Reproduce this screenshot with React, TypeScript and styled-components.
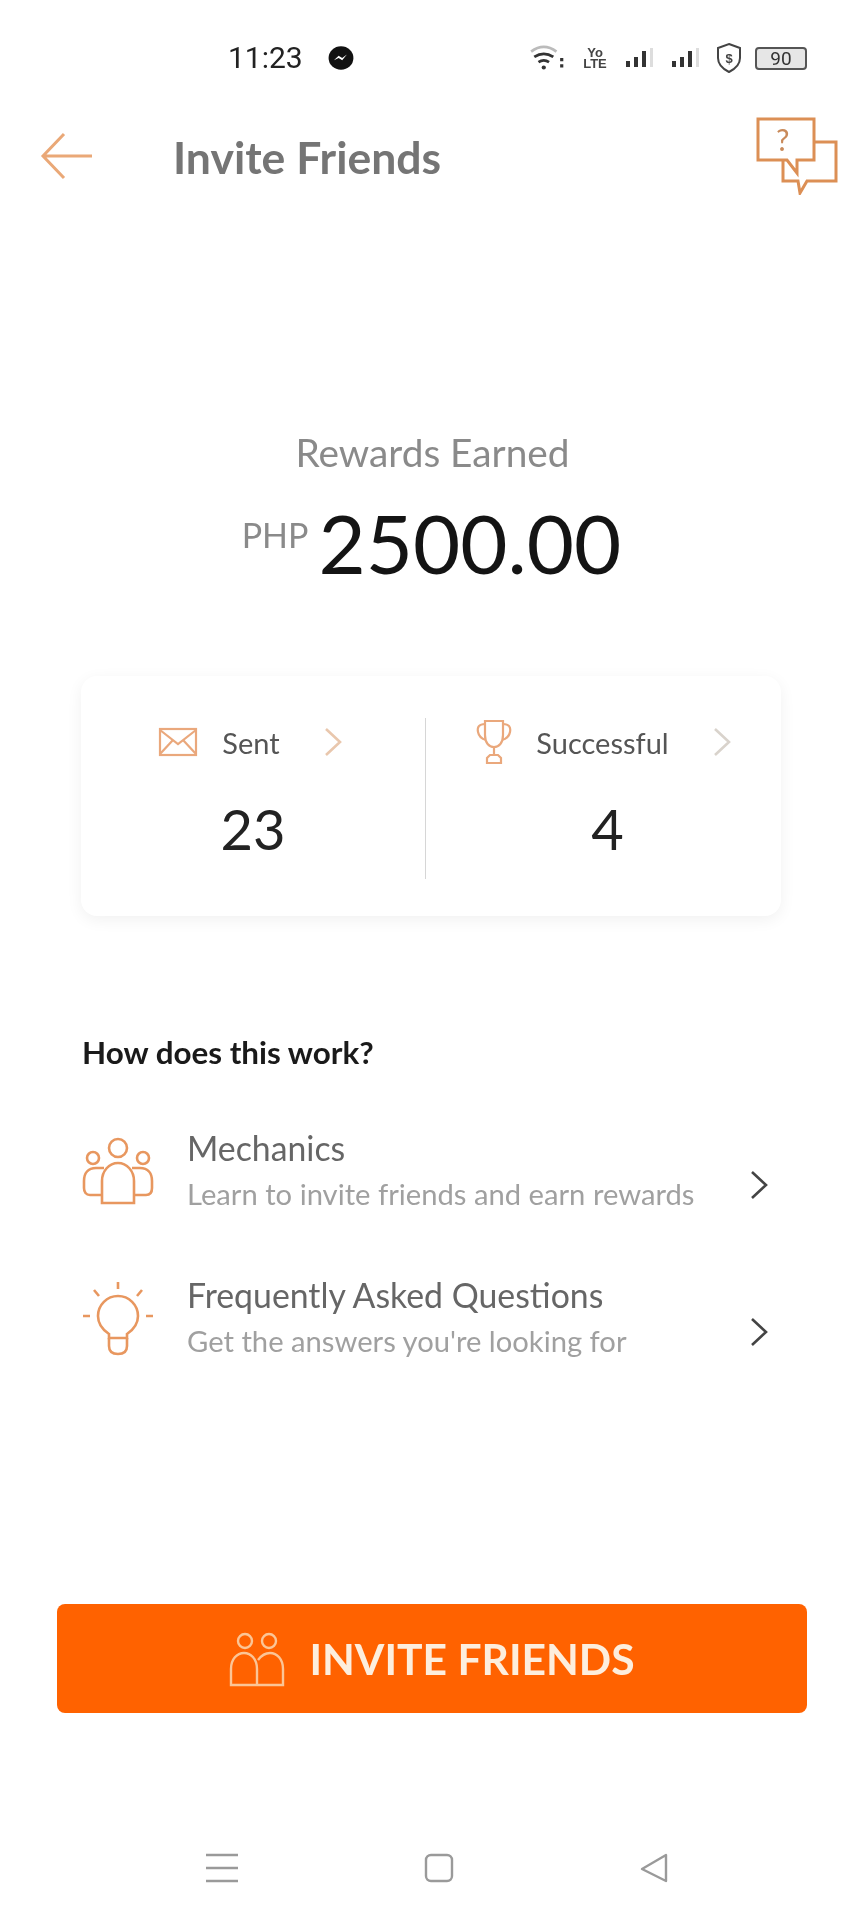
import React from "react";
import styled, { createGlobalStyle } from "styled-components";

const ORANGE = "#e8975f";

const GlobalStyle = createGlobalStyle`
  html, body {
    margin: 0;
    padding: 0;
    background: #fff;
  }
  * {
    box-sizing: border-box;
  }
`;

const Page = styled.div`
  width: 865px;
  height: 1920px;
  background: #fff;
  display: flex;
  flex-direction: column;
  font-family: "Lato", "Noto Sans", sans-serif;
  color: #1c1c1c;
  overflow: hidden;
  filter: blur(0.6px);
`;

const StatusBar = styled.div`
  height: 76px;
  padding: 40px 58px 0 228px;
  display: flex;
  align-items: center;
  justify-content: space-between;
`;

const StatusLeft = styled.div`
  display: flex;
  align-items: center;
  gap: 25px;
`;

const Clock = styled.span`
  font-family: "Roboto", sans-serif;
  font-size: 30px;
  line-height: 36px;
  color: #222;
`;

const StatusRight = styled.div`
  display: flex;
  align-items: center;
  gap: 12px;
`;

const NetLabel = styled.span`
  font-family: "Liberation Sans", sans-serif;
  font-size: 13px;
  line-height: 11px;
  width: 32px;
  font-weight: 700;
  color: #444;
  text-align: center;
`;

const Battery = styled.div`
  width: 52px;
  height: 23px;
  border: 2px solid #555;
  border-radius: 4px;
  background: #e6e6e6;
  display: flex;
  align-items: center;
  justify-content: center;
  font-family: "Roboto", sans-serif;
  font-size: 19px;
  color: #333;
`;

const Header = styled.header`
  height: 88px;
  margin-top: 36px;
  padding: 0 27px 0 40px;
  display: flex;
  align-items: center;
`;

const Title = styled.h1`
  margin: 0 0 0 79px;
  flex: 1;
  font-size: 44.5px;
  font-weight: 700;
  color: #757575;
`;

const Rewards = styled.section`
  margin-top: 229px;
  display: flex;
  flex-direction: column;
  align-items: center;
`;

const RewardsLabel = styled.div`
  font-size: 38.8px;
  line-height: 46px;
  color: #8a8a8a;
`;

const AmountRow = styled.div`
  margin-top: 18px;
  display: flex;
  align-items: flex-start;
  gap: 10px;
  padding-right: 2px;
`;

const Currency = styled.span`
  font-size: 34px;
  line-height: 40px;
  margin-top: 22px;
  color: #8a8a8a;
`;

const Amount = styled.span`
  font-size: 81.5px;
  line-height: 100px;
  color: #141414;
`;

const StatsCard = styled.section`
  margin: 83px 84px 0 81px;
  height: 240px;
  border-radius: 16px;
  background: #fff;
  box-shadow: 0 4px 16px rgba(0, 0, 0, 0.06);
  padding: 42px 0 37px;
  display: grid;
  grid-template-columns: 344px 1px 1fr;
`;

const Stat = styled.div`
  display: flex;
  flex-direction: column;
  align-items: center;
`;

const StatHead = styled.div<{ $shift: number }>`
  display: flex;
  align-items: center;
  height: 48px;
  gap: 24px;
  margin-left: ${(p) => p.$shift}px;
`;

const StatLabel = styled.span`
  font-size: 29px;
  margin-right: 20px;
  color: #555;
`;

const StatValue = styled.div<{ $shift: number }>`
  margin-top: 31px;
  margin-left: ${(p) => p.$shift}px;
  font-size: 56px;
  line-height: 64px;
  color: #222;
`;

const Divider = styled.div`
  background: #d6d6d6;
`;

const HowSection = styled.section`
  margin-top: 116px;
  padding: 0 97px 0 82px;
`;

const HowTitle = styled.h2`
  margin: 0;
  font-size: 31.4px;
  line-height: 40px;
  font-weight: 700;
  color: #1a1a1a;
`;

const InfoRow = styled.div`
  display: grid;
  grid-template-columns: 72px 1fr 18px;
  column-gap: 33px;
  align-items: center;
  height: 100px;
  margin-top: 49px;

  & + & {
    margin-top: 47px;
  }
`;

const InfoTitle = styled.div`
  font-size: 33.8px;
  line-height: 46px;
  color: #666;
`;

const InfoSub = styled.div`
  font-size: 29.2px;
  line-height: 46px;
  color: #a0a0a0;
  white-space: nowrap;
`;

const RowArrow = styled.div`
  margin-top: 28px;
  display: flex;
`;

const InviteButton = styled.button`
  margin: 236px 58px 0 57px;
  height: 109px;
  border: none;
  border-radius: 8px;
  background: #ff6200;
  display: flex;
  align-items: center;
  justify-content: center;
  gap: 24px;
  font-family: inherit;
  font-size: 42.6px;
  font-weight: 700;
  color: #fdeedd;
`;

const NavBar = styled.nav`
  margin-top: 140px;
  padding: 0 196px 0 206px;
  display: flex;
  justify-content: space-between;
  align-items: center;
`;

const BackArrow = () => (
  <svg width="54" height="50" viewBox="0 0 54 50" fill="none" stroke="#eaa877" strokeWidth="3">
    <path d="M52 25H3M24 3L3 25l21 22" />
  </svg>
);

const HelpIcon = () => (
  <svg width="82" height="78" viewBox="0 0 82 78" fill="none" stroke="#dc8f55" strokeWidth="3">
    <path d="M2 2H58V43H41L41 56 31 43H2Z" />
    <path d="M58 25H80V64H51L44 76 42 64H27V44" />
    <text x="20" y="34" fontFamily="Lato" fontSize="30" fill="#c98a5a" stroke="none">?</text>
  </svg>
);

const Messenger = () => (
  <svg width="26" height="26" viewBox="0 0 22 22">
    <ellipse cx="11" cy="11" rx="10.5" ry="10" fill="#111" />
    <path d="M5 13l4-4 3 2 4-3-4 5-3-2z" fill="#fff" />
  </svg>
);

const Wifi = () => (
  <svg width="38" height="26" viewBox="0 0 36 24" fill="none" stroke="#333" strokeWidth="2.6">
    <path d="M2 6c8-6 16-6 24 0" stroke="#bbb" />
    <path d="M5 11c6-4 12-4 18 0M9 16c3-2 7-2 10 0" />
    <circle cx="14" cy="21" r="2" fill="#333" stroke="none" />
    <path d="M31 12v3M31 18v3" strokeWidth="3" />
  </svg>
);

const Signal = () => (
  <svg width="34" height="20" viewBox="0 0 32 20" fill="#333">
    <rect x="2" y="13" width="4" height="6" />
    <rect x="10" y="9" width="4" height="10" />
    <rect x="18" y="3" width="4" height="16" />
    <rect x="26" y="0" width="3" height="19" fill="#ddd" />
  </svg>
);

const Shield = () => (
  <svg width="28" height="32" viewBox="0 0 28 32" fill="none" stroke="#444" strokeWidth="2">
    <path d="M14 2l11 4v10c0 7-5 11-11 14C8 27 3 23 3 16V6z" />
    <text x="14" y="21" textAnchor="middle" fontFamily="Liberation Sans" fontSize="13" fontWeight="700" fill="#444" stroke="none">$</text>
  </svg>
);

const Chevron = ({ color = "#444", h = 30 }: { color?: string; h?: number }) => (
  <svg width={h * 0.6} height={h} viewBox="0 0 18 30" fill="none" stroke={color} strokeWidth="2.6">
    <path d="M2 2l14 13L2 28" />
  </svg>
);

const Envelope = () => (
  <svg width="40" height="30" viewBox="0 0 40 30" fill="none" stroke="#eaa87c" strokeWidth="2.2">
    <rect x="2" y="2" width="36" height="26" />
    <path d="M2 3l18 14L38 3M2 27l13-14M38 27L25 13" />
  </svg>
);

const Trophy = () => (
  <svg width="36" height="46" viewBox="0 0 36 46" fill="none" stroke="#eaa87c" strokeWidth="2.2">
    <path d="M9 2h18v14c0 8-4 12-9 12s-9-4-9-12z" />
    <path d="M9 5C3 5 1 8 2 13s4 7 8 8M27 5c6 0 8 3 7 8s-4 7-8 8" />
    <path d="M18 28v8M11 44v-5l3-3h8l3 3v5z" />
  </svg>
);

const GroupIcon = () => (
  <svg width="72" height="68" viewBox="0 0 72 68" fill="none" stroke={ORANGE} strokeWidth="2.6">
    <circle cx="36" cy="11" r="9" />
    <circle cx="11" cy="21" r="6" />
    <circle cx="61" cy="21" r="6" />
    <path d="M20 66V44c0-10 7-18 16-18s16 8 16 18v22z" />
    <path d="M20 58H8c-4 0-6-3-6-7V44c0-8 4-13 12-13h8M52 58h12c4 0 6-3 6-7V44c0-8-4-13-12-13h-8" />
  </svg>
);

const BulbIcon = () => (
  <svg width="72" height="76" viewBox="0 0 72 76" fill="none" stroke={ORANGE} strokeWidth="2.6">
    <path d="M36 2v7M12 10l5 6M60 10l-5 6M1 36h7M64 36h7" />
    <path d="M27 58v-4c-6-4-11-10-11-18 0-11 9-20 20-20s20 9 20 20c0 8-5 14-11 18v4z" />
    <path d="M27 58v8c0 5 3 8 9 8s9-3 9-8v-8" />
  </svg>
);

const FriendsIcon = () => (
  <svg width="56" height="56" viewBox="0 0 56 56" fill="none" stroke="#fbc596" strokeWidth="2.4">
    <circle cx="16" cy="10" r="7" />
    <circle cx="40" cy="10" r="7" />
    <path d="M28 54H2V38c0-10 6-16 13-16s13 6 13 16zM28 54h26V38c0-10-6-16-13-16-5 0-9 3-12 7" />
  </svg>
);

const MenuIcon = () => (
  <svg width="32" height="30" viewBox="0 0 32 30" stroke="#9a9a9a" strokeWidth="2.6">
    <path d="M0 2h32M0 15h32M0 28h32" />
  </svg>
);

const HomeIcon = () => (
  <svg width="30" height="30" viewBox="0 0 30 30" fill="none" stroke="#9a9a9a" strokeWidth="2.4">
    <rect x="2" y="2" width="26" height="26" rx="5" />
  </svg>
);

const BackIcon = () => (
  <svg width="30" height="30" viewBox="0 0 30 30" fill="none" stroke="#9a9a9a" strokeWidth="2.4" strokeLinejoin="round">
    <path d="M27 2v26L3 16z" />
  </svg>
);

export default function App() {
  return (
    <Page>
      <GlobalStyle />
      <StatusBar>
        <StatusLeft>
          <Clock>11:23</Clock>
          <Messenger />
        </StatusLeft>
        <StatusRight>
          <Wifi />
          <NetLabel>Yo LTE</NetLabel>
          <Signal />
          <Signal />
          <Shield />
          <Battery>90</Battery>
        </StatusRight>
      </StatusBar>

      <Header>
        <BackArrow />
        <Title>Invite Friends</Title>
        <HelpIcon />
      </Header>

      <Rewards>
        <RewardsLabel>Rewards Earned</RewardsLabel>
        <AmountRow>
          <Currency>PHP</Currency>
          <Amount>2500.00</Amount>
        </AmountRow>
      </Rewards>

      <StatsCard>
        <Stat>
          <StatHead $shift={-6}>
            <Envelope />
            <StatLabel>Sent</StatLabel>
            <Chevron color="#e9c7ad" />
          </StatHead>
          <StatValue $shift={0}>23</StatValue>
        </Stat>
        <Divider />
        <Stat>
          <StatHead $shift={0}>
            <Trophy />
            <StatLabel>Successful</StatLabel>
            <Chevron color="#d9d3cc" />
          </StatHead>
          <StatValue $shift={8}>4</StatValue>
        </Stat>
      </StatsCard>

      <HowSection>
        <HowTitle>How does this work?</HowTitle>
        <InfoRow>
          <GroupIcon />
          <div>
            <InfoTitle>Mechanics</InfoTitle>
            <InfoSub>Learn to invite friends and earn rewards</InfoSub>
          </div>
          <RowArrow>
            <Chevron />
          </RowArrow>
        </InfoRow>
        <InfoRow>
          <BulbIcon />
          <div>
            <InfoTitle>Frequently Asked Questions</InfoTitle>
            <InfoSub>Get the answers you're looking for</InfoSub>
          </div>
          <RowArrow>
            <Chevron />
          </RowArrow>
        </InfoRow>
      </HowSection>

      <InviteButton>
        <FriendsIcon />
        INVITE FRIENDS
      </InviteButton>

      <NavBar>
        <MenuIcon />
        <HomeIcon />
        <BackIcon />
      </NavBar>
    </Page>
  );
}
